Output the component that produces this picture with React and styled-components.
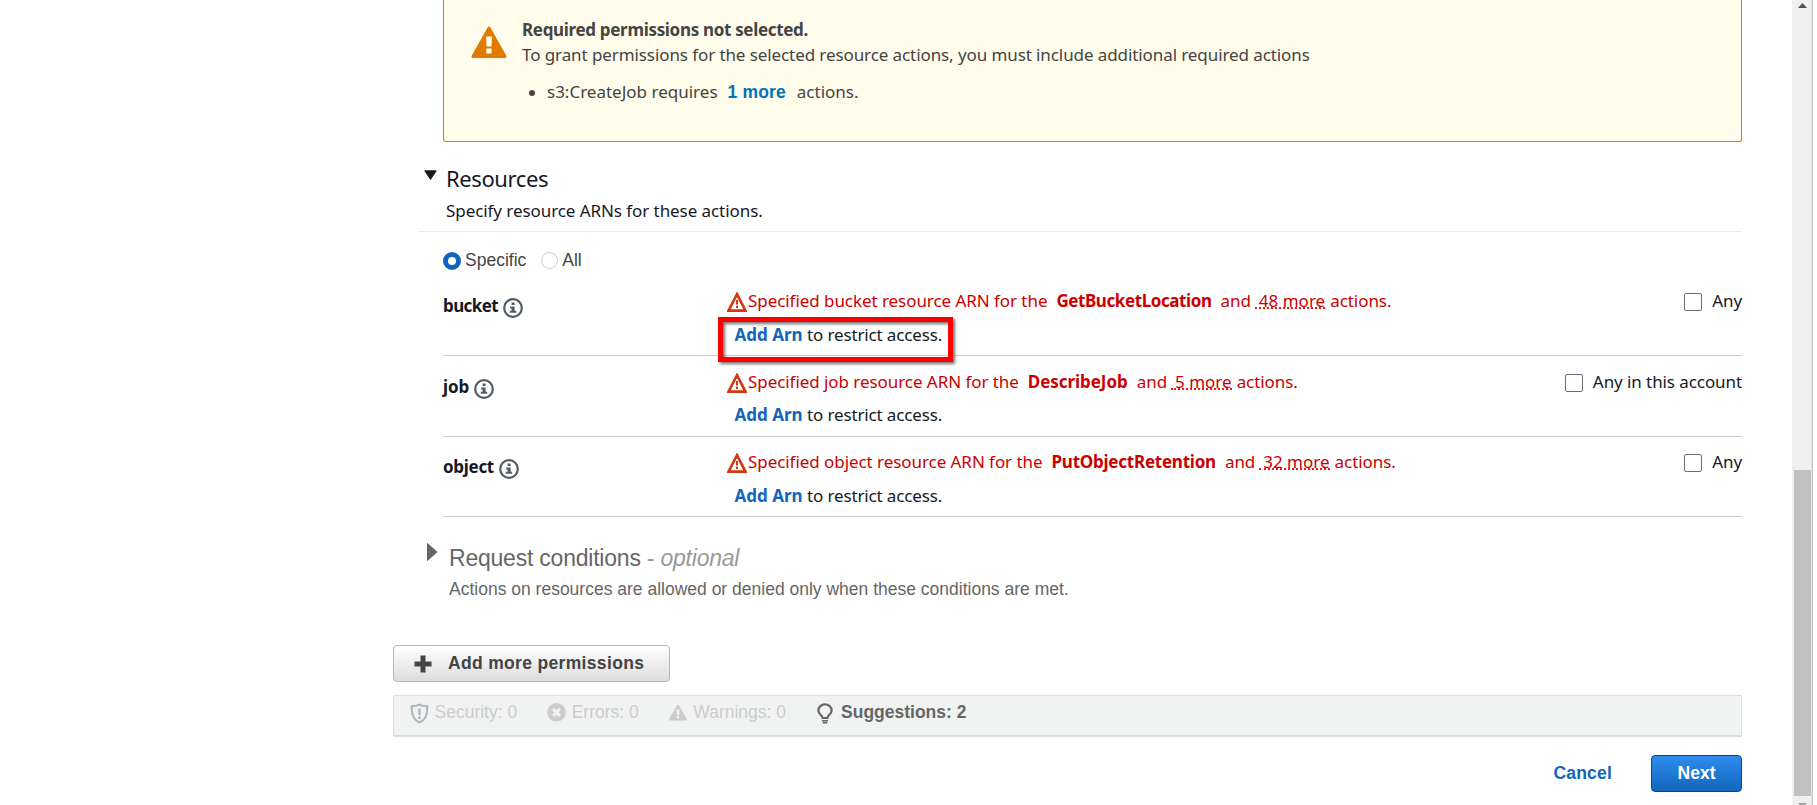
import React from 'react';
import styled, { createGlobalStyle } from 'styled-components';

const EMBER = '"Noto Sans", sans-serif';
const ARIAL = '"Liberation Sans", Arial, sans-serif';

const Global = createGlobalStyle`
  * { box-sizing: border-box; }
  html, body { margin: 0; height: 100%; overflow: hidden; background: #fff; }
  body { color: #16191f; font: 17px/24px ${EMBER}; }
  h2, p, ul { margin: 0; padding: 0; font-weight: 400; }
  svg { display: block; flex: none; }
`;
const Page = styled.div`
  display: flex;
  width: 1817px;
  height: 805px;
  overflow: hidden;
`;
const Main = styled.main`
  flex: 1;
  padding: 0 50px 0 393px;
`;
const Alert = styled.section`
  display: flex;
  height: 142px;
  margin-left: 50px;
  padding: 17px 28px 0 27px;
  border: 1px solid #e07b00;
  border-top: 0;
  border-radius: 0 0 3px 3px;
  background: #fffceb;
  color: #444;
  svg { margin: 9px 15px 0 0; }
`;
const AlertTitle = styled.p`
  font-weight: 700;
  line-height: 25px;
  letter-spacing: -0.32px;
`;
const AlertText = styled.p`
  line-height: 25px;
  letter-spacing: -0.09px;
`;
const AlertItem = styled.li`
  display: flex;
  align-items: center;
  margin-top: 12px;
  line-height: 25px;
  list-style: none;
  &::before {
    content: '';
    width: 6px;
    height: 6px;
    margin: 2px 12px 0 7px;
    border-radius: 50%;
    background: #444;
  }
`;
const MoreLink = styled.a`
  margin: 0 11px 0 10px;
  color: #0073bb;
  font: 700 17.5px/24px ${ARIAL};
  letter-spacing: 0.15px;
`;
const Section = styled.section`
  margin: 24px 0 0 25px;
`;
const SectionHead = styled.header`
  display: flex;
  height: 66px;
  border-bottom: 1px solid #eaeded;
  svg { margin: 4px 9px 0 6px; }
`;
const Title = styled.h2`
  margin-top: -1px;
  font-size: 22px;
  line-height: 26px;
  letter-spacing: -0.4px;
`;
const Hint = styled.p`
  margin-top: 8px;
  letter-spacing: -0.07px;
`;
const Choices = styled.div`
  display: flex;
  gap: 15px;
  margin: 16px 0 3px 25px;
  font: 17.5px/24px ${ARIAL};
  color: #444;
`;
const Choice = styled.label`
  display: flex;
  align-items: flex-start;
  gap: 4px;
`;
const Radio = styled.span`
  width: ${p => (p.$on ? 18 : 17)}px;
  height: ${p => (p.$on ? 18 : 17)}px;
  margin-top: 4px;
  border: ${p => (p.$on ? '5.5px solid #1166bb' : '1px solid #ccc')};
  border-radius: 50%;
  background: #fff;
`;
const Row = styled.div`
  display: grid;
  grid-template-columns: 284px 1fr auto;
  height: ${p => p.$h}px;
  margin-left: 25px;
  padding-top: ${p => p.$top}px;
  border-bottom: 1px solid #ccc;
`;
const RowName = styled.div`
  display: flex;
  gap: 5px;
  padding-top: 5px;
  font-weight: 700;
  letter-spacing: ${p => p.$ls}px;
  svg { margin-top: 4px; }
`;
const Warning = styled.p`
  display: flex;
  color: #c00;
  white-space: pre;
  letter-spacing: -0.06px;
  svg { margin: 3px 1px 0 0; }
  b { margin: 0 9px 0 9px; letter-spacing: ${p => p.$ls}px; }
`;
const Count = styled.span`
  height: 20px;
  margin: 0 5px 0 4px;
  padding-left: 4px;
  border-bottom: 2px dotted #f11;
  letter-spacing: 0;
`;
const Restrict = styled.p`
  position: relative;
  margin-top: ${p => p.$gap}px;
  padding-left: 7.5px;
  letter-spacing: -0.15px;
  a { margin-right: 4.5px; color: #1166bb; font-weight: 700; letter-spacing: 0; }
`;
const Highlight = styled.span`
  position: absolute;
  left: -9px;
  top: -6px;
  width: 235px;
  height: 45px;
  border: 5px solid #f00;
  filter: drop-shadow(2px 2px 1.5px rgba(0, 0, 0, 0.55));
`;
const AnyOption = styled.label`
  display: flex;
  gap: 10px;
  letter-spacing: -0.08px;
`;
const Checkbox = styled.span`
  width: 18px;
  height: 18px;
  margin-top: 4px;
  border: 1px solid #687078;
  border-radius: 2px;
`;
const Conditions = styled.section`
  display: flex;
  margin: 26px 0 0 33px;
  color: #666;
  font: 17.5px/24px ${ARIAL};
  svg { margin: 0 11px 0 1px; }
`;
const CondTitle = styled.h2`
  margin-top: 1px;
  font-size: 23px;
  line-height: 28px;
  letter-spacing: -0.22px;
  em, span { color: #999; }
`;
const CondHint = styled.p`
  margin-top: 5px;
`;
const AddButton = styled.button`
  display: flex;
  align-items: center;
  width: 277px;
  height: 37px;
  margin-top: 44px;
  padding: 0 0 2px 20px;
  border: 1px solid #b8b8b8;
  border-radius: 4px;
  background: linear-gradient(#fff, #ddd);
  color: #444;
  font: 700 17.5px/24px ${ARIAL};
  letter-spacing: 0.33px;
  svg { margin: 3px 16px 0 0; }
`;
const StatusBar = styled.footer`
  display: flex;
  gap: 30px;
  height: 42px;
  margin-top: 13px;
  padding: 4px 0 0 16px;
  border: 1px solid #ddd;
  border-bottom-width: 2px;
  background: #f1f3f3;
  font: 17.5px/24px ${ARIAL};
`;
const Status = styled.span`
  display: flex;
  gap: ${p => p.$gap}px;
  color: ${p => (p.$active ? '#666' : '#ccc')};
  font-weight: ${p => (p.$active ? 700 : 400)};
  svg { margin-top: 3px; }
`;
const Actions = styled.div`
  display: flex;
  justify-content: flex-end;
  align-items: center;
  gap: 39px;
  margin-top: 18px;
  font: 700 17.5px/24px ${ARIAL};
`;
const Cancel = styled.a`
  padding-bottom: 2px;
  color: #1166bb;
  letter-spacing: 0.2px;
`;
const Next = styled.button`
  width: 91px;
  height: 37px;
  padding: 0 0 2px;
  border: 1px solid #0f4880;
  border-radius: 4px;
  background: linear-gradient(#2e8df0, #1166bb);
  color: #fff;
  font: inherit;
`;
const Scrollbar = styled.div`
  display: flex;
  flex-direction: column;
  align-items: flex-end;
  width: 20px;
  background: #f0f0f0;
  border-right: 1px solid #e4e4e4;
  svg { margin: 3px 4px 4px 0; }
`;
const Thumb = styled.div`
  flex: none;
  width: 17px;
  height: 326px;
  margin: 458px 0 4px;
  background: #c1c1c1;
`;
const Edge = styled.div`
  width: 5px;
  border-left: 1px solid #c2c6cb;
  background: #fff;
`;

const InfoIcon = () => (
  <svg width="20" height="20" viewBox="0 0 20 20">
    <circle cx="10" cy="10" r="8.8" fill="none" stroke="#545b64" strokeWidth="2.2" />
    <path d="M8.6 4.5h3v2.6h-3zM7.2 8.4h4.4v4.4h1.6v2H6.8v-2h1.8v-2.4H7.2z" fill="#545b64" />
  </svg>
);
const ErrorIcon = () => (
  <svg width="20" height="20" viewBox="0 0 20 20">
    <path d="M10 2.200 18.400 18.600H1.600z" fill="none" stroke="#d5350f" strokeWidth="2.600" />
    <path d="M9 8h2v4.600H9zM9 13.800h2v2.200H9z" fill="#d5350f" />
  </svg>
);

const rows = [
  { name: 'bucket', nls: -0.6, action: 'GetBucketLocation', ls: -0.42, count: '48 more', any: 'Any', h: 81, top: 14, gap: 10, marked: true },
  { name: 'job', nls: -0.1, action: 'DescribeJob', ls: -0.05, count: '5 more', any: 'Any in this account', h: 81, top: 14, gap: 9 },
  { name: 'object', nls: -0.3, action: 'PutObjectRetention', ls: -0.23, count: '32 more', any: 'Any', h: 80, top: 13, gap: 10 },
];

export default function App() {
  return (
    <Page>
      <Global />
      <Main>
        <Alert>
          <svg width="36" height="33" viewBox="0 0 36 33">
            <path d="M18 2 34 30.5H2z" fill="#e07b00" stroke="#e07b00" strokeWidth="3" strokeLinejoin="round" />
            <path d="M15 10.500h6l-.5 10h-5zM15.300 22.500h5.300v5h-5.300z" fill="#fffceb" />
          </svg>
          <div>
            <AlertTitle>Required permissions not selected.</AlertTitle>
            <AlertText>To grant permissions for the selected resource actions, you must include additional required actions</AlertText>
            <ul>
              <AlertItem>s3:CreateJob requires<MoreLink>1 more</MoreLink>actions.</AlertItem>
            </ul>
          </div>
        </Alert>
        <Section>
          <SectionHead>
            <svg width="13" height="10" viewBox="0 0 13 10"><path d="M.8.8h11.400L6.500 9.400z" fill="#16191f" stroke="#16191f" strokeLinejoin="round" /></svg>
            <div>
              <Title>Resources</Title>
              <Hint>Specify resource ARNs for these actions.</Hint>
            </div>
          </SectionHead>
          <Choices>
            <Choice><Radio $on />Specific</Choice>
            <Choice><Radio />All</Choice>
          </Choices>
          {rows.map(r => (
            <Row key={r.name} $h={r.h} $top={r.top}>
              <RowName $ls={r.nls}>{r.name}<InfoIcon /></RowName>
              <div>
                <Warning $ls={r.ls}>
                  <ErrorIcon />Specified {r.name} resource ARN for the<b>{r.action}</b>and<Count>{r.count}</Count>actions.
                </Warning>
                <Restrict $gap={r.gap}>
                  <a>Add Arn</a>to restrict access.
                  {r.marked && <Highlight />}
                </Restrict>
              </div>
              <AnyOption><Checkbox />{r.any}</AnyOption>
            </Row>
          ))}
        </Section>
        <Conditions>
          <svg width="11" height="18" viewBox="0 0 11 18"><path d="M.5.500 10 9 .5 17.500z" fill="#666" stroke="#666" strokeLinejoin="round" /></svg>
          <div>
            <CondTitle>Request conditions <span>- <em>optional</em></span></CondTitle>
            <CondHint>Actions on resources are allowed or denied only when these conditions are met.</CondHint>
          </div>
        </Conditions>
        <AddButton>
          <svg width="18" height="18" viewBox="0 0 18 18"><path d="M9 .500v17M.5 9h17" stroke="#444" strokeWidth="5" /></svg>
          Add more permissions
        </AddButton>
        <StatusBar>
          <Status $gap={5.5}>
            <svg width="19" height="21" viewBox="0 0 19 21">
              <path d="M9.500 1.500C7.500 2.900 4.500 3.200 1.800 3.200c-.5 7 .8 13.300 7.700 16.300 6.900-3 8.200-9.300 7.700-16.300-2.700 0-5.700-.3-7.700-1.700z" fill="none" stroke="#aab7b8" strokeWidth="2" />
              <path d="M8.300 5.500h2.400v6.800H8.300zM8.300 13.500h2.400v2.500H8.300z" fill="#aab7b8" />
            </svg>
            Security: 0
          </Status>
          <Status $gap={5.5}>
            <svg width="19" height="20" viewBox="0 0 19 20">
              <circle cx="9.500" cy="9.300" r="9.300" fill="#ccc" />
              <path d="m6 5.800 7 7m0-7-7 7" stroke="#f1f3f3" strokeWidth="3.200" />
            </svg>
            Errors: 0
          </Status>
          <Status $gap={6.5}>
            <svg width="18" height="20" viewBox="0 0 18 20">
              <path d="M9 2.500 17 16.500H1z" fill="#ccc" stroke="#ccc" strokeWidth="2" strokeLinejoin="round" />
              <path d="M7.500 6.500h3l-.3 5.500H7.800zM7.800 13h2.400v2.500H7.800z" fill="#f1f3f3" />
            </svg>
            Warnings: 0
          </Status>
          <Status $gap={7} $active>
            <svg width="18" height="22" viewBox="0 0 18 22">
              <path d="M6.600 15c0-2.600-4.200-3.600-4.200-7.600a6.600 6 0 0 1 13.200 0c0 4-4.200 5-4.200 7.600z" fill="none" stroke="#666" strokeWidth="2.200" />
              <path d="M6 17h6v1.500H6zM6.700 19h4.600v1.500H6.700z" fill="#666" />
            </svg>
            Suggestions: 2
          </Status>
        </StatusBar>
        <Actions>
          <Cancel>Cancel</Cancel>
          <Next>Next</Next>
        </Actions>
      </Main>
      <Scrollbar>
        <svg width="9" height="5" viewBox="0 0 9 5"><path d="M0 5 4.500 0 9 5z" fill="#505050" /></svg>
        <Thumb />
        <svg width="9" height="5" viewBox="0 0 9 5"><path d="M0 0h9L4.500 5z" fill="#a3a3a3" /></svg>
      </Scrollbar>
      <Edge />
    </Page>
  );
}
